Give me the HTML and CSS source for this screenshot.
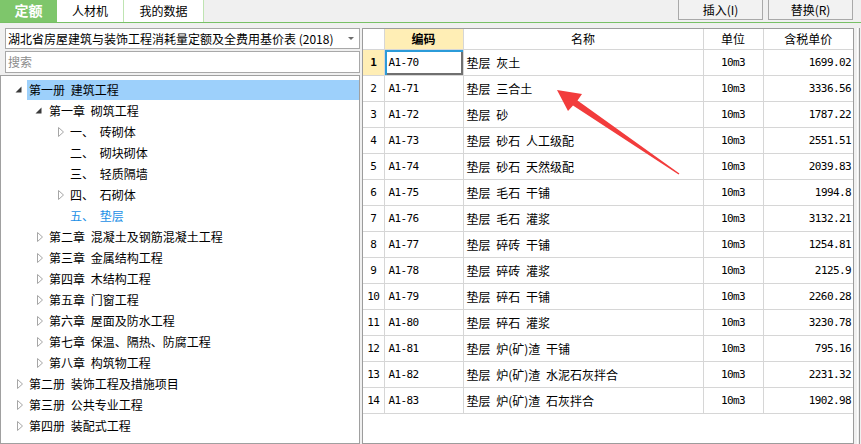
FILE: index.html
```html
<!DOCTYPE html>
<html lang="zh-CN">
<head>
<meta charset="utf-8">
<title>定额</title>
<link rel="stylesheet" href="styles.css">
</head>
<body>
<div class="topbar">
  <div class="tabs">
    <div class="tab tab-active">定额</div>
    <div class="tab tab-rcj">人材机</div>
    <div class="tab tab-my">我的数据</div>
  </div>
  <div class="actions">
    <div class="btn">插入(I)</div>
    <div class="btn">替换(R)</div>
  </div>
</div>
<div class="main">
  <div class="left">
    <div class="select"><span>湖北省房屋建筑与装饰工程消耗量定额及全费用基价表 (2018)</span><span class="caret"></span></div>
    <div class="search">搜索</div>
    <div class="tree">
      <div class="row l0 sel"><span class="tg"><svg width="7" height="7" viewBox="0 0 7 7"><polygon points="6.5,0.5 6.5,6.5 0.5,6.5" fill="#3a3a3a"/></svg></span><span class="label">第一册 建筑工程</span></div>
      <div class="row l1"><span class="tg"><svg width="7" height="7" viewBox="0 0 7 7"><polygon points="6.5,0.5 6.5,6.5 0.5,6.5" fill="#3a3a3a"/></svg></span><span class="label">第一章 砌筑工程</span></div>
      <div class="row l2"><span class="tg"><svg class="tri" width="6" height="10" viewBox="0 0 6 10"><polygon points="0.5,0.5 5.5,5 0.5,9.5" fill="#fff" stroke="#a6a6a6"/></svg></span><span class="label">一、 砖砌体</span></div>
      <div class="row l2"><span class="tg"></span><span class="label">二、 砌块砌体</span></div>
      <div class="row l2"><span class="tg"></span><span class="label">三、 轻质隔墙</span></div>
      <div class="row l2"><span class="tg"><svg class="tri" width="6" height="10" viewBox="0 0 6 10"><polygon points="0.5,0.5 5.5,5 0.5,9.5" fill="#fff" stroke="#a6a6a6"/></svg></span><span class="label">四、 石砌体</span></div>
      <div class="row l2 cur"><span class="tg"></span><span class="label">五、 垫层</span></div>
      <div class="row l1"><span class="tg"><svg class="tri" width="6" height="10" viewBox="0 0 6 10"><polygon points="0.5,0.5 5.5,5 0.5,9.5" fill="#fff" stroke="#a6a6a6"/></svg></span><span class="label">第二章 混凝土及钢筋混凝土工程</span></div>
      <div class="row l1"><span class="tg"><svg class="tri" width="6" height="10" viewBox="0 0 6 10"><polygon points="0.5,0.5 5.5,5 0.5,9.5" fill="#fff" stroke="#a6a6a6"/></svg></span><span class="label">第三章 金属结构工程</span></div>
      <div class="row l1"><span class="tg"><svg class="tri" width="6" height="10" viewBox="0 0 6 10"><polygon points="0.5,0.5 5.5,5 0.5,9.5" fill="#fff" stroke="#a6a6a6"/></svg></span><span class="label">第四章 木结构工程</span></div>
      <div class="row l1"><span class="tg"><svg class="tri" width="6" height="10" viewBox="0 0 6 10"><polygon points="0.5,0.5 5.5,5 0.5,9.5" fill="#fff" stroke="#a6a6a6"/></svg></span><span class="label">第五章 门窗工程</span></div>
      <div class="row l1"><span class="tg"><svg class="tri" width="6" height="10" viewBox="0 0 6 10"><polygon points="0.5,0.5 5.5,5 0.5,9.5" fill="#fff" stroke="#a6a6a6"/></svg></span><span class="label">第六章 屋面及防水工程</span></div>
      <div class="row l1"><span class="tg"><svg class="tri" width="6" height="10" viewBox="0 0 6 10"><polygon points="0.5,0.5 5.5,5 0.5,9.5" fill="#fff" stroke="#a6a6a6"/></svg></span><span class="label">第七章 保温、隔热、防腐工程</span></div>
      <div class="row l1"><span class="tg"><svg class="tri" width="6" height="10" viewBox="0 0 6 10"><polygon points="0.5,0.5 5.5,5 0.5,9.5" fill="#fff" stroke="#a6a6a6"/></svg></span><span class="label">第八章 构筑物工程</span></div>
      <div class="row l0"><span class="tg"><svg class="tri" width="6" height="10" viewBox="0 0 6 10"><polygon points="0.5,0.5 5.5,5 0.5,9.5" fill="#fff" stroke="#a6a6a6"/></svg></span><span class="label">第二册 装饰工程及措施项目</span></div>
      <div class="row l0"><span class="tg"><svg class="tri" width="6" height="10" viewBox="0 0 6 10"><polygon points="0.5,0.5 5.5,5 0.5,9.5" fill="#fff" stroke="#a6a6a6"/></svg></span><span class="label">第三册 公共专业工程</span></div>
      <div class="row l0"><span class="tg"><svg class="tri" width="6" height="10" viewBox="0 0 6 10"><polygon points="0.5,0.5 5.5,5 0.5,9.5" fill="#fff" stroke="#a6a6a6"/></svg></span><span class="label">第四册 装配式工程</span></div>
    </div>
  </div>
  <div class="right">
    <table class="grid">
      <colgroup><col class="c-no"><col class="c-code"><col class="c-name"><col class="c-unit"><col class="c-price"></colgroup>
      <thead>
        <tr><th></th><th class="th-code">编码</th><th>名称</th><th>单位</th><th>含税单价</th></tr>
      </thead>
      <tbody>
        <tr class="selrow"><td class="no mono">1</td><td class="code mono focus">A1-70</td><td class="name">垫层 灰土</td><td class="unit mono">10m3</td><td class="price mono">1699.02</td></tr>
        <tr><td class="no mono">2</td><td class="code mono">A1-71</td><td class="name">垫层 三合土</td><td class="unit mono">10m3</td><td class="price mono">3336.56</td></tr>
        <tr><td class="no mono">3</td><td class="code mono">A1-72</td><td class="name">垫层 砂</td><td class="unit mono">10m3</td><td class="price mono">1787.22</td></tr>
        <tr><td class="no mono">4</td><td class="code mono">A1-73</td><td class="name">垫层 砂石 人工级配</td><td class="unit mono">10m3</td><td class="price mono">2551.51</td></tr>
        <tr><td class="no mono">5</td><td class="code mono">A1-74</td><td class="name">垫层 砂石 天然级配</td><td class="unit mono">10m3</td><td class="price mono">2039.83</td></tr>
        <tr><td class="no mono">6</td><td class="code mono">A1-75</td><td class="name">垫层 毛石 干铺</td><td class="unit mono">10m3</td><td class="price mono">1994.8</td></tr>
        <tr><td class="no mono">7</td><td class="code mono">A1-76</td><td class="name">垫层 毛石 灌浆</td><td class="unit mono">10m3</td><td class="price mono">3132.21</td></tr>
        <tr><td class="no mono">8</td><td class="code mono">A1-77</td><td class="name">垫层 碎砖 干铺</td><td class="unit mono">10m3</td><td class="price mono">1254.81</td></tr>
        <tr><td class="no mono">9</td><td class="code mono">A1-78</td><td class="name">垫层 碎砖 灌浆</td><td class="unit mono">10m3</td><td class="price mono">2125.9</td></tr>
        <tr><td class="no mono">10</td><td class="code mono">A1-79</td><td class="name">垫层 碎石 干铺</td><td class="unit mono">10m3</td><td class="price mono">2260.28</td></tr>
        <tr><td class="no mono">11</td><td class="code mono">A1-80</td><td class="name">垫层 碎石 灌浆</td><td class="unit mono">10m3</td><td class="price mono">3230.78</td></tr>
        <tr><td class="no mono">12</td><td class="code mono">A1-81</td><td class="name">垫层 炉(矿)渣 干铺</td><td class="unit mono">10m3</td><td class="price mono">795.16</td></tr>
        <tr><td class="no mono">13</td><td class="code mono">A1-82</td><td class="name">垫层 炉(矿)渣 水泥石灰拌合</td><td class="unit mono">10m3</td><td class="price mono">2231.32</td></tr>
        <tr><td class="no mono">14</td><td class="code mono">A1-83</td><td class="name">垫层 炉(矿)渣 石灰拌合</td><td class="unit mono">10m3</td><td class="price mono">1902.98</td></tr>
      </tbody>
    </table>
  </div>
  <div class="splitter"><div class="split-line"></div></div>
</div>
<svg class="arrow" width="861" height="444" viewBox="0 0 861 444">
  <polygon points="557,90 582,94 577.5,100.5 679.4,173.4 678.6,174.6 573,105.5 568,111" fill="#f23c3c"/>
</svg>
</body>
</html>
```
FILE: styles.css
```css
* { box-sizing: border-box; }
html, body { margin: 0; padding: 0; }
body {
  width: 861px;
  height: 444px;
  overflow: hidden;
  position: relative;
  background: #f0f0f0;
  font-family: "Noto Sans CJK SC", sans-serif;
  font-size: 12px;
  color: #000;
  word-spacing: 3px;
}

.topbar {
  display: flex;
  justify-content: space-between;
  height: 23px;
  border-bottom: 1px solid #78c066;
}
.tabs { display: flex; }
.tab {
  height: 22px;
  line-height: 21px;
  text-align: center;
  background: #fff;
  border-right: 1px solid #bfe4b2;
}
.tab-active {
  width: 57px;
  background: #7ec66b;
  border-right: none;
  color: #fff;
  font-weight: bold;
  font-size: 14px;
}
.tab-rcj { width: 67px; }
.tab-my { width: 80px; }

.actions {
  display: flex;
  gap: 5px;
  padding-right: 8px;
}
.btn {
  width: 85px;
  height: 21px;
  margin-top: -1px;
  border: 1px solid #a9a9a9;
  background: #f2f2f2;
  line-height: 19px;
  text-align: center;
  word-spacing: 0;
}

.main {
  display: flex;
  height: 421px;
  padding-top: 5px;
}
.left {
  width: 360px;
  display: flex;
  flex-direction: column;
}
.select {
  margin-left: 5px;
  height: 21px;
  border: 1px solid #a8a8a8;
  background: #fff;
  display: flex;
  align-items: center;
  justify-content: space-between;
  padding-left: 2px;
  padding-right: 5px;
  white-space: nowrap;
  word-spacing: 0;
}
.caret {
  width: 0;
  height: 0;
  border-left: 3px solid transparent;
  border-right: 3px solid transparent;
  border-top: 3px solid #6c6c6c;
}
.search {
  margin: 2px 0 0 5px;
  height: 22px;
  border: 1px solid #a8a8a8;
  background: #fff;
  color: #8c8c8c;
  padding-left: 2px;
  line-height: 20px;
}
.tree {
  margin-top: 2px;
  flex: 1;
  border: 1px solid #a0a0a0;
  background: #fff;
  padding-top: 3px;
}
.row {
  display: flex;
  align-items: center;
  height: 21px;
  white-space: nowrap;
}
.l0 { padding-left: 12px; }
.l1 { padding-left: 32px; }
.l2 { padding-left: 53px; }
.tg {
  width: 16px;
  height: 21px;
  flex: none;
  display: flex;
  align-items: center;
  padding-left: 2px;
}
.tg .tri { margin-left: 2px; }
.label { line-height: 20px; }
.sel .label {
  flex: 1;
  margin-left: -2px;
  padding-left: 2px;
  height: 20px;
  background: #9dd0fb;
}
.cur .label { color: #1a8fe6; }

.right {
  margin-left: 2px;
  width: 492px;
  border: 1px solid #9c9c9c;
  background: #fff;
}
.grid {
  border-collapse: collapse;
  table-layout: fixed;
  width: 490px;
}
.c-no { width: 21px; }
.c-code { width: 79px; }
.c-name { width: 240px; }
.c-unit { width: 60px; }
.c-price { width: 90px; }
.grid th, .grid td {
  border: 1px solid #d6d6d6;
  padding: 0;
  white-space: nowrap;
  overflow: hidden;
}
.grid th {
  height: 20px;
  font-weight: normal;
  text-align: center;
  border-top: none;
}
.grid tr > :first-child { border-left: none; }
.grid tr > :last-child { border-right: none; }
.grid .th-code { background: #ffeeb5; font-weight: bold; }
.grid td { height: 26px; }
.mono {
  font-family: "DejaVu Sans Mono", monospace;
  font-size: 11px;
  letter-spacing: -0.6px;
  word-spacing: 0;
}
.no { text-align: center; }
.selrow .no { background: #ffeeb5; font-weight: bold; }
.code { padding-left: 4px !important; }
.focus { box-shadow: inset 2px 2px 0 #2b9bd9, inset -2px -2px 0 #707070; }
.name { padding-left: 3px !important; }
.unit { text-align: center; }
.price { text-align: right; padding-right: 2px !important; }

.splitter { width: 7px; }
.split-line {
  margin-left: 3px;
  width: 3px;
  height: 100%;
  border-left: 1px solid #fdfdfd;
  border-right: 1px solid #9a9a9a;
}

.arrow {
  position: absolute;
  left: 0;
  top: 0;
  pointer-events: none;
}
```
